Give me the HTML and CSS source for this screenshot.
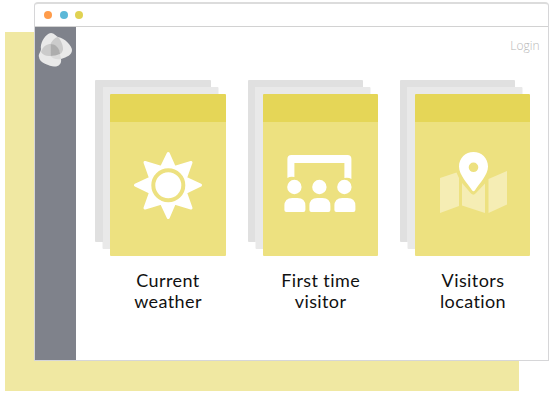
FILE: index.html
```html
<!DOCTYPE html>
<html lang="en">
<head>
<meta charset="utf-8">
<title>Personalisation</title>
<link rel="stylesheet" href="styles.css">
</head>
<body>
<div class="backdrop"></div>
<div class="window">
  <header class="titlebar"><i class="dot orange"></i><i class="dot blue"></i><i class="dot yellow"></i></header>
  <div class="content">
    <aside class="sidebar">
      <svg class="logo" viewBox="0 0 36 36" width="36" height="36">
        <path fill="#e9e9e9" d="M13 1C16 1 18 4 20 5C27 6 34 14 34 18C34 23 29 25 23 27C24 32 20 35 16 34.5C12 34 1 31 1 25C0 22 3 20 3 17C2 12 6 4 11 1.5Z"/>
        <path fill="#cbcbcb" d="M20 5C23 8 25.5 14 25 18Q24 21 22 22C22 18 18 13 12.500 12C14 9 17 5 20 5Z"/>
        <path fill="#cbcbcb" d="M3 20C5 14 9 12 12.500 12V24C8 24.500 5 23 3 20Z"/>
        <path fill="#dadada" d="M12.500 24Q19 24 22 22L23 27Q16 28 12.500 24Z"/>
        <path fill="#adadad" d="M12.500 12C18 12 22 17 22 22Q18 24 12.500 24Z"/>
      </svg>
    </aside>
    <main class="main">
      <a class="login">Login</a>
      <div class="cards">
        <section class="item">
          <div class="stack"><div class="card">
            <svg viewBox="0 0 90 90" width="90" height="90">
              <path class="sun" d="M43.3 13.500L49.500 27.500L66 22.500L60.500 38L75.500 45.200L60.500 52.500L66 68L49.500 63L43.3 77.500L36.500 63L20 68L25.500 52.500L10.500 45.200L25.500 38L20 22.500L36.500 27.500Z"/>
              <circle class="ring" cx="43.3" cy="45.2" r="15"/>
            </svg>
          </div></div>
          <h2 class="label">Current<br>weather</h2>
        </section>
        <section class="item">
          <div class="stack"><div class="card">
            <svg viewBox="2.600 0 90 90" width="90" height="90">
              <path class="white" d="M12 38V19Q12 15 16 15H72Q76 15 76 19V39Q73 37 69 38V23H19V37Q15 36 12 38Z"/>
              <g class="white">
                <circle cx="19" cy="47" r="7.2"/><circle cx="44" cy="47" r="7.2"/><circle cx="69" cy="47" r="7.2"/>
                <path id="body" d="M9 70V66Q9 58 17 58H22Q30 58 30 66V70Q30 72 28 72H11Q9 72 9 70Z"/>
                <use href="#body" x="25"/><use href="#body" x="50"/>
              </g>
            </svg>
          </div></div>
          <h2 class="label">First time<br>visitor</h2>
        </section>
        <section class="item">
          <div class="stack"><div class="card">
            <svg viewBox="0 0 90 90" width="90" height="90">
              <path class="map" d="M10 38L26.5 32.5Q28 36 29 38V66L10 73ZM32 43L41 53.5Q43.5 56 46 53L55 43.5V73L32 65.5ZM58.5 39L77 31V64.5L58.5 73Z"/>
              <path class="white" fill-rule="evenodd" d="M43.5 12C51.5 12 58 18 58 26.5C58 35 49 44 45 50.3Q43.5 52 42 50.3C38 44 29 35 29 26.5C29 18 35.5 12 43.5 12ZM43.5 22.5A4.8 4.8 0 1 0 43.5 32.1A4.8 4.8 0 1 0 43.5 22.5Z"/>
            </svg>
          </div></div>
          <h2 class="label">Visitors<br>location</h2>
        </section>
      </div>
    </main>
  </div>
</div>
</body>
</html>
```
FILE: styles.css
```css
* { box-sizing: border-box; }
body {
  margin: 0;
  height: 401px;
  padding: 2px 1px 0 34px;
  background: #fff;
  font-family: Lato, "Open Sans", sans-serif;
  overflow: hidden;
}
.backdrop {
  position: absolute;
  left: 5px;
  top: 32px;
  width: 514px;
  height: 359px;
  background: #f0e8a2;
}
.window {
  position: relative;
  display: flex;
  flex-direction: column;
  height: 359px;
  background: #fff;
  border: 1px solid #d6d6d8;
  border-top: 2px solid #dcdcdc;
  border-radius: 4px 4px 0 0;
}
.titlebar {
  display: flex;
  align-items: center;
  gap: 7.3px;
  height: 23px;
  padding-left: 9.3px;
  border-bottom: 1px solid #d2d2d2;
}
.dot { width: 8px; height: 8px; border-radius: 50%; }
.orange { background: #ff9c4b; }
.blue { background: #5bb8d8; }
.yellow { background: #e0d252; }
.content { display: flex; flex: 1; }
.sidebar { width: 41px; padding: 5px 0 0 3px; background: #7f828b; }
.logo { display: block; }
.main { flex: 1; display: flex; flex-direction: column; }
.login {
  align-self: flex-end;
  margin: 10px 8.5px 0 0;
  height: 18px;
  line-height: 18px;
  font-family: "Open Sans", sans-serif;
  font-size: 12px;
  font-weight: 300;
  color: #b8b8b8;
}
.cards {
  display: grid;
  grid-template-columns: 152.6px 152.4px 132px;
  margin: 25px 0 0 19px;
}
.stack {
  width: 115.5px;
  height: 162px;
  padding: 14px 0 0 15px;
  border-radius: 1px;
  background: linear-gradient(#e9e9e9, #e9e9e9) 7.5px 7px no-repeat, #e0e0e0;
  box-shadow: 7.5px 7px 0 #e9e9e9;
}
.card {
  width: 115.5px;
  height: 162px;
  padding: 18px 0 0 15px;
  border-top: 28px solid #e5d657;
  border-radius: 1px;
  background: #ede180;
}
.card svg { display: block; }
.white { fill: #fff; }
.map { fill: #f5edb4; }
.sun { fill: #fff; stroke: #fff; stroke-width: 3; stroke-linejoin: round; }
.ring { fill: #fff; stroke: #ede180; stroke-width: 4; }
.label {
  width: 116px;
  margin: 28px 0 0 15px;
  font-size: 18px;
  line-height: 20.5px;
  font-weight: 400;
  letter-spacing: .4px;
  text-align: center;
  color: #111;
}
```
